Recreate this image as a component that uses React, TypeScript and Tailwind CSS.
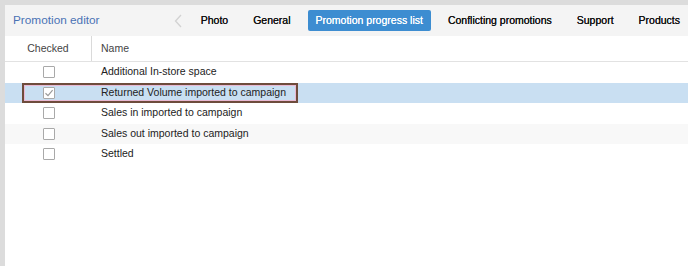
import React from "react";

const TABS = ["Photo", "General", "Promotion progress list", "Conflicting promotions", "Support", "Products"];
const ACTIVE_TAB = "Promotion progress list";

const ROWS = [
  { name: "Additional In-store space", checked: false },
  { name: "Returned Volume imported to campaign", checked: true, selected: true },
  { name: "Sales in imported to campaign", checked: false },
  { name: "Sales out imported to campaign", checked: false },
  { name: "Settled", checked: false },
];

function Checkbox({ checked }: { checked: boolean }) {
  return (
    <span className="flex h-[12px] w-[12px] items-center justify-center rounded-[1px] border border-[#a9a9a9] bg-white">
      {checked && (
        <svg width="10" height="10" viewBox="0 0 10 10" fill="none">
          <path d="M1.5 5.2 L4 7.6 L8.6 2.2" stroke="#9a9a9a" strokeWidth="1.2" />
        </svg>
      )}
    </span>
  );
}

export default function App() {
  return (
    <div className="h-[266px] w-[688px] overflow-hidden bg-[#dcdcdc] pl-[5px] pt-[5px] font-['Liberation_Sans',Arial,sans-serif]">
      <div className="flex h-full flex-col bg-white">
        {/* header bar */}
        <div className="flex h-[31px] shrink-0 items-center whitespace-nowrap bg-[#f4f4f4]">
          <span className="pl-[8px] text-[11.8px] text-[#4a72b4]">Promotion editor</span>
          <div className="ml-auto flex items-center gap-[9px]">
            <svg width="8" height="14" viewBox="0 0 8 14" className="mr-[2px]">
              <path d="M7 1 L1.5 7 L7 13" stroke="#d2d2d2" strokeWidth="1.3" fill="none" />
            </svg>
            {TABS.map((t) =>
              t === ACTIVE_TAB ? (
                <span
                  key={t}
                  className="flex h-[21px] items-center rounded-[2px] bg-[#3d8dd1] px-[8px] text-[10.5px] text-white [text-shadow:0_0_0.4px_#fff]"
                >
                  {t}
                </span>
              ) : (
                <span key={t} className="px-[8px] text-[10.5px] text-[#111] [text-shadow:0_0_0.4px_#111]">
                  {t}
                </span>
              )
            )}
          </div>
        </div>

        {/* column header */}
        <div className="flex h-[26px] shrink-0 whitespace-nowrap border-b border-[#e2e2e2] text-[10.5px] text-[#444]">
          <div className="flex w-[87px] items-center justify-center border-r border-[#dadada]">Checked</div>
          <div className="flex items-center pl-[9px]">Name</div>
        </div>

        {/* rows */}
        <div>
          {ROWS.map((r, i) => (
            <div
              key={r.name}
              className={
                "relative flex h-[20.5px] items-center whitespace-nowrap text-[10.5px] text-[#222] " +
                (r.selected ? "bg-[#c9dff2]" : i % 2 === 1 ? "bg-[#f8f8f8]" : "bg-white")
              }
            >
              <div className="flex w-[87px] justify-center">
                <Checkbox checked={r.checked} />
              </div>
              <div className="pl-[9px]">{r.name}</div>
              {r.selected && (
                <div className="pointer-events-none absolute left-[17px] top-0 h-[20.5px] w-[276px] border-2 border-[#6e4c3c] shadow-[inset_0_0_0_1px_#e9b9d3]" />
              )}
            </div>
          ))}
        </div>
      </div>
    </div>
  );
}
